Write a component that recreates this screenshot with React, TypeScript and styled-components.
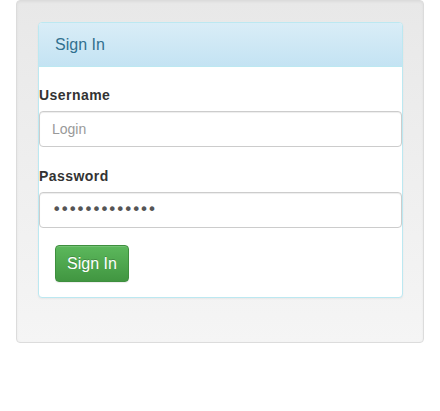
import React from "react";
import styled, { createGlobalStyle } from "styled-components";

const Global = createGlobalStyle`
  html, body { margin: 0; padding: 0; background: #fff; }
  body {
    font-family: "Liberation Sans", Arial, Helvetica, sans-serif;
    font-size: 14px;
    line-height: 1.42857143;
    color: #333;
  }
  * { box-sizing: border-box; }
`;

const Page = styled.div`
  padding: 0 16px;
`;

const Well = styled.div`
  min-height: 20px;
  padding: 21px 20px 44px 21px;
  border: 1px solid #dcdcdc;
  border-radius: 4px;
  background-image: linear-gradient(to bottom, #e8e8e8 0%, #f5f5f5 100%);
  box-shadow: inset 0 1px 3px rgba(0, 0, 0, 0.05), 0 1px 0 rgba(255, 255, 255, 0.1);
`;

const Panel = styled.div`
  background: #fff;
  border: 1px solid #bce8f1;
  border-radius: 4px;
  box-shadow: 0 1px 2px rgba(0, 0, 0, 0.05);
`;

const PanelHeading = styled.div`
  padding: 11px 15px 9px 16px;
  border-bottom: 1px solid #bce8f1;
  border-top-left-radius: 3px;
  border-top-right-radius: 3px;
  background-image: linear-gradient(to bottom, #d9edf7 0%, #c4e3f3 100%);
  color: #31708f;
`;

const PanelTitle = styled.h3`
  margin: 0;
  font-size: 16px;
  font-weight: normal;
  line-height: 1.42857143;
  color: inherit;
`;

const PanelBody = styled.form`
  display: flex;
  flex-direction: column;
  padding: 18px 0 15px 0;
`;

const FormGroup = styled.div<{ $last?: boolean }>`
  display: flex;
  flex-direction: column;
  margin-bottom: ${(p) => (p.$last ? "17px" : "19px")};
`;

const Label = styled.label`
  display: block;
  font-weight: bold;
  font-size: 14px;
  line-height: 20px;
  letter-spacing: 0.45px;
  margin-bottom: 6px;
  color: #333;
`;

const Input = styled.input<{ $secret?: boolean }>`
  display: block;
  width: 100%;
  height: 36px;
  padding: 6px 12px;
  font-family: ${(p) => (p.$secret ? '"DejaVu Sans", sans-serif' : "inherit")};
  font-size: ${(p) => (p.$secret ? "16px" : "14px")};
  letter-spacing: ${(p) => (p.$secret ? "-1.5px" : "normal")};
  line-height: 1.42857143;
  color: #555;
  background: #fff;
  border: 1px solid #ccc;
  border-radius: 4px;
  box-shadow: inset 0 1px 1px rgba(0, 0, 0, 0.075);
  outline: none;
  &::placeholder { color: #999; }
`;

const ButtonRow = styled.div`
  display: flex;
  padding-left: 16px;
`;

const Button = styled.button`
  font-family: inherit;
  font-size: 16px;
  line-height: 23px;
  height: 37px;
  padding: 6px 11px;
  color: #fff;
  border: 1px solid #3e8f3e;
  border-radius: 4px;
  background-image: linear-gradient(to bottom, #5cb85c 0%, #419641 100%);
  text-shadow: 0 -1px 0 rgba(0, 0, 0, 0.2);
  box-shadow: inset 0 1px 0 rgba(255, 255, 255, 0.15), 0 1px 1px rgba(0, 0, 0, 0.075);
  cursor: pointer;
`;

export default function App() {
  return (
    <>
      <Global />
      <Page>
        <Well>
          <Panel>
            <PanelHeading>
              <PanelTitle>Sign In</PanelTitle>
            </PanelHeading>
            <PanelBody onSubmit={(e) => e.preventDefault()}>
              <FormGroup>
                <Label htmlFor="username">Username</Label>
                <Input id="username" type="text" placeholder="Login" />
              </FormGroup>
              <FormGroup $last>
                <Label htmlFor="password">Password</Label>
                <Input id="password" type="password" $secret defaultValue="aaaaaaaaaaaaa" />
              </FormGroup>
              <ButtonRow>
                <Button type="submit">Sign In</Button>
              </ButtonRow>
            </PanelBody>
          </Panel>
        </Well>
      </Page>
    </>
  );
}
